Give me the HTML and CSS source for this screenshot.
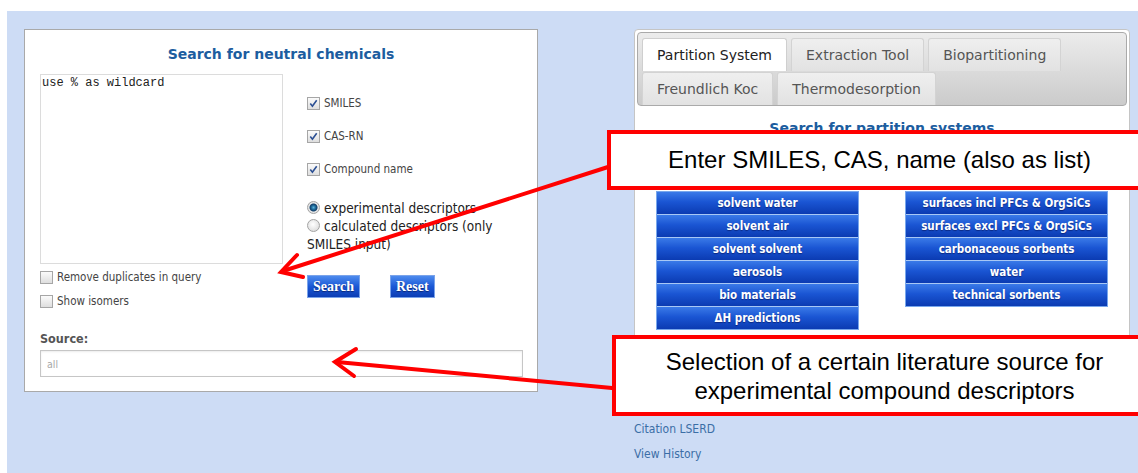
FILE: index.html
```html
<!DOCTYPE html>
<html lang="en">
<head>
<meta charset="utf-8">
<title>LSER Database – Search</title>
<link rel="stylesheet" href="styles.css">
</head>
<body>
<div class="page">
  <section class="search-panel">
    <h2 class="panel-title">Search for neutral chemicals</h2>
    <div class="search-grid">
      <div class="query-col">
        <textarea class="query-box" spellcheck="false">use % as wildcard</textarea>
        <label class="opt opt-dup"><span class="cb"></span>Remove duplicates in query</label>
        <label class="opt opt-iso"><span class="cb"></span>Show isomers</label>
      </div>
      <div class="options-col">
        <label class="opt"><span class="cb"><svg viewBox="0 0 11 11"><path d="M2.3 5.6 L4.4 8.2 L8.7 2.2"/></svg></span>SMILES</label>
        <label class="opt opt-next"><span class="cb"><svg viewBox="0 0 11 11"><path d="M2.3 5.6 L4.4 8.2 L8.7 2.2"/></svg></span>CAS-RN</label>
        <label class="opt opt-next"><span class="cb"><svg viewBox="0 0 11 11"><path d="M2.3 5.6 L4.4 8.2 L8.7 2.2"/></svg></span>Compound name</label>
        <div class="radios">
          <label class="radio-line"><span class="rb on"></span>experimental descriptors</label>
          <label class="radio-line"><span class="rb"></span>calculated descriptors (only SMILES input)</label>
        </div>
        <div class="actions">
          <button class="btn" type="button">Search</button>
          <button class="btn" type="button">Reset</button>
        </div>
      </div>
    </div>
    <div class="source-label">Source:</div>
    <input class="source-input" type="text" placeholder="all">
  </section>

  <div class="right-col">
    <section class="tabs-panel">
      <ul class="tab-bar">
        <li class="tab active">Partition System</li>
        <li class="tab">Extraction Tool</li>
        <li class="tab">Biopartitioning</li>
        <li class="tab">Freundlich Koc</li>
        <li class="tab">Thermodesorption</li>
      </ul>
      <h2 class="panel-title sub-title">Search for partition systems</h2>
      <div class="sys-cols">
        <div class="sys-list">
          <a class="sys-btn">solvent water</a>
          <a class="sys-btn">solvent air</a>
          <a class="sys-btn">solvent solvent</a>
          <a class="sys-btn">aerosols</a>
          <a class="sys-btn">bio materials</a>
          <a class="sys-btn">ΔH predictions</a>
        </div>
        <div class="sys-list">
          <a class="sys-btn">surfaces incl PFCs &amp; OrgSiCs</a>
          <a class="sys-btn">surfaces excl PFCs &amp; OrgSiCs</a>
          <a class="sys-btn">carbonaceous sorbents</a>
          <a class="sys-btn">water</a>
          <a class="sys-btn">technical sorbents</a>
        </div>
      </div>
    </section>
    <a class="side-link first">Citation LSERD</a>
    <a class="side-link">View History</a>
  </div>
</div>

<svg class="pointers" width="1138" height="473" viewBox="0 0 1138 473">
  <g fill="none" stroke="#ff0000" stroke-width="4" stroke-linejoin="miter" stroke-linecap="round">
    <path d="M608 167 L283 271"/>
    <path d="M297 255 L281 272 L303 277"/>
    <path d="M612 388 L337 362"/>
    <path d="M356 349 L335 362 L354 376"/>
  </g>
</svg>

<div class="note note-query">Enter SMILES, CAS, name (also as list)</div>
<div class="note note-source">Selection of a certain literature source for<br>experimental compound descriptors</div>
</body>
</html>
```

FILE: styles.css
```css
* {
  box-sizing: border-box;
}

html,
body {
  margin: 0;
  padding: 0;
}

body {
  position: relative;
  width: 1138px;
  height: 473px;
  overflow: hidden;
  background: #ffffff;
  font-family: "DejaVu Sans", Verdana, sans-serif;
  font-stretch: condensed;
  color: #333333;
}

/* blue page area */
.page {
  margin: 11px 0 0 7px;
  height: 462px;
  background: #cddcf5;
  padding: 18px 0 0 17px;
  display: flex;
  align-items: flex-start;
  gap: 96px;
}

/* ---------- left: chemical search ---------- */
.search-panel {
  width: 514px;
  height: 363px;
  background: #ffffff;
  border: 1px solid #a9a9a9;
  padding: 15px 15px 0 15px;
}

.panel-title {
  margin: 0;
  font-size: 14px;
  font-stretch: normal;
  line-height: 18px;
  font-weight: bold;
  color: #1c5d9f;
  text-align: center;
}

.search-grid {
  display: grid;
  grid-template-columns: 243px 1fr;
  column-gap: 24px;
  margin-top: 11px;
}

.query-box {
  display: block;
  width: 243px;
  height: 190px;
  margin: 0;
  padding: 1px 1px;
  border: 1px solid #dcdcdc;
  font-family: "Liberation Mono", "Courier New", monospace;
  font-stretch: normal;
  font-size: 12px;
  line-height: 14px;
  color: #222222;
  resize: none;
  overflow: hidden;
}

.opt {
  display: flex;
  align-items: center;
  gap: 4px;
  font-size: 11.5px;
  line-height: 14px;
  color: #444444;
}

.opt-dup {
  margin-top: 6px;
}

.opt-iso {
  margin-top: 10px;
}

.cb {
  flex: none;
  width: 13px;
  height: 13px;
  border: 1px solid #a6a6a6;
  background: linear-gradient(#fbfbfb, #dedede);
  display: flex;
  align-items: center;
  justify-content: center;
}

.cb svg {
  width: 11px;
  height: 11px;
}

.cb svg path {
  fill: none;
  stroke: #2b4f93;
  stroke-width: 1.6;
}

.options-col {
  padding-top: 22px;
}

.opt-next {
  margin-top: 19px;
}

.radios {
  margin-top: 23px;
  font-size: 13.5px;
  line-height: 18px;
  color: #222222;
}

.radio-line {
  display: block;
}

.rb {
  display: inline-block;
  width: 13px;
  height: 13px;
  margin-right: 4px;
  vertical-align: -1px;
  border-radius: 50%;
  border: 1px solid #a3a3a3;
  background: radial-gradient(circle at 45% 40%, #ffffff, #d4d4d4);
}

.rb.on {
  background: radial-gradient(circle at 50% 50%, #5fb0d8 0, #1f6d9c 2px, #123f6a 3.5px, #e9e9e9 4.5px, #cfcfcf 100%);
}

.actions {
  margin-top: 22px;
  display: flex;
  gap: 30px;
}

.btn {
  height: 23px;
  padding: 0 5px;
  border: 1px solid #7aa3ea;
  background: linear-gradient(#4d8bee, #1a58d6 50%, #0c3db4);
  color: #ffffff;
  font-family: "Liberation Serif", "Times New Roman", serif;
  font-weight: bold;
  font-size: 14px;
  text-shadow: 0 1px 1px rgba(0, 0, 40, 0.5);
}

.source-label {
  margin-top: 24px;
  font-size: 12.5px;
  line-height: 14px;
  font-weight: bold;
  color: #555555;
}

.source-input {
  display: block;
  margin-top: 4px;
  width: 483px;
  height: 27px;
  padding: 0 6px;
  border: 1px solid #c6c6c6;
  box-shadow: inset 0 1px 2px rgba(0, 0, 0, 0.08);
  font-family: "DejaVu Sans", Verdana, sans-serif;
  font-stretch: condensed;
  font-size: 10.5px;
  color: #333333;
}

.source-input::placeholder {
  color: #a8a8a8;
}

/* ---------- right: partition tools ---------- */
.right-col {
  width: 496px;
  display: flex;
  flex-direction: column;
}

.tabs-panel {
  height: 314px;
  background: #ffffff;
  border: 1px solid #c5c5c5;
  border-radius: 4px;
  padding: 2px;
}

.tab-bar {
  list-style: none;
  margin: 0;
  height: 74px;
  padding: 5px 0 0 4px;
  display: flex;
  flex-wrap: wrap;
  align-content: flex-start;
  gap: 1px 4px;
  border: 1px solid #aaaaaa;
  border-radius: 4px;
  background: linear-gradient(#ececec, #cbcbcb);
}

.tab {
  height: 33px;
  padding: 0 14px;
  display: flex;
  align-items: center;
  background: linear-gradient(#efefef, #e2e2e2);
  border: 1px solid #d3d3d3;
  border-bottom: 0;
  border-radius: 3px 3px 0 0;
  font-size: 14px;
  font-stretch: normal;
  color: #555555;
}

.tab.active {
  background: #ffffff;
  border-color: #cfcfcf;
  color: #212121;
}

.sub-title {
  margin-top: 13px;
}

.sys-cols {
  display: flex;
  align-items: flex-start;
  gap: 46px;
  padding-left: 19px;
  margin-top: 54px;
}

.sys-list {
  width: 203px;
  display: flex;
  flex-direction: column;
  gap: 1px;
  border: 1px solid #78a7ec;
  background: #a8c8f5;
}

.sys-btn {
  height: 22px;
  display: flex;
  align-items: center;
  justify-content: center;
  background: linear-gradient(#3a7ae8, #1a55d3 45%, #0b3bb2);
  color: #ffffff;
  font-size: 11.5px;
  font-weight: bold;
  text-shadow: 0 1px 1px rgba(0, 0, 50, 0.45);
}

.side-link {
  display: block;
  font-size: 12px;
  line-height: 16px;
  color: #3b6ea6;
  text-decoration: none;
  margin-top: 9px;
}

.side-link.first {
  margin-top: 78px;
}

/* ---------- annotation layer ---------- */
.pointers {
  position: absolute;
  left: 0;
  top: 0;
  pointer-events: none;
}

.note {
  position: absolute;
  width: 545px;
  background: #ffffff;
  border: 4px solid #ff0000;
  font-family: "Liberation Sans", Arial, sans-serif;
  font-stretch: normal;
  font-size: 24px;
  color: #000000;
  text-align: center;
}

.note-query {
  left: 607px;
  top: 130px;
  height: 60px;
  line-height: 52px;
}

.note-source {
  left: 612px;
  top: 335px;
  height: 81px;
  padding-top: 8px;
  line-height: 29px;
}
```
